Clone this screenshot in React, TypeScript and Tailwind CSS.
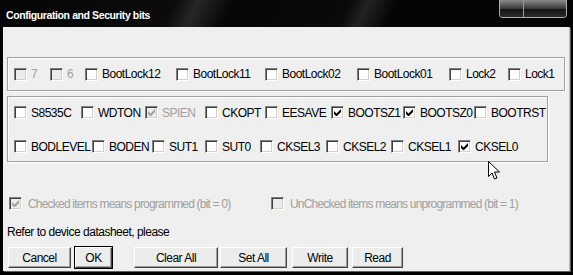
import React from "react";

type Bit = { label: string; w: number; checked?: boolean; disabled?: boolean };

const row1: Bit[] = [
  { label: "7", w: 36, disabled: true },
  { label: "6", w: 35, disabled: true },
  { label: "BootLock12", w: 91 },
  { label: "BootLock11", w: 89 },
  { label: "BootLock02", w: 92 },
  { label: "BootLock01", w: 92 },
  { label: "Lock2", w: 59 },
  { label: "Lock1", w: 60 },
];

const row2: Bit[] = [
  { label: "S8535C", w: 67 },
  { label: "WDTON", w: 64 },
  { label: "SPIEN", w: 60, checked: true, disabled: true },
  { label: "CKOPT", w: 60 },
  { label: "EESAVE", w: 66 },
  { label: "BOOTSZ1", w: 72, checked: true },
  { label: "BOOTSZ0", w: 71, checked: true },
  { label: "BOOTRST", w: 70 },
];

const row3: Bit[] = [
  { label: "BODLEVEL", w: 78 },
  { label: "BODEN", w: 60 },
  { label: "SUT1", w: 53 },
  { label: "SUT0", w: 55 },
  { label: "CKSEL3", w: 66 },
  { label: "CKSEL2", w: 65 },
  { label: "CKSEL1", w: 67 },
  { label: "CKSEL0", w: 60, checked: true },
];

const txt = "whitespace-nowrap text-[12px] leading-none tracking-[-0.5px]";

const Box = ({ checked, disabled }: { checked?: boolean; disabled?: boolean }) => (
  <span
    className={`flex h-[13px] w-[13px] shrink-0 items-center justify-center border border-t-[#808080] border-l-[#808080] border-r-white border-b-white shadow-[inset_1px_1px_0_#404040,inset_-1px_-1px_0_#d4d0c8] ${
      disabled ? "bg-[#ececec]" : "bg-white"
    }`}
  >
    {checked && (
      <svg width="7" height="7" viewBox="0 0 7 7">
        <path
          d="M0 2v3l2 2h1l4-4V0L2.5 4.5z"
          fill={disabled ? "#a0a0a0" : "#000"}
        />
      </svg>
    )}
  </span>
);

const Check = ({ bit }: { bit: Bit }) => (
  <div className="flex shrink-0 items-center gap-[4px]" style={{ width: bit.w }}>
    <Box checked={bit.checked} disabled={bit.disabled} />
    <span className={`${txt} ${bit.disabled ? "text-[#a0a0a0]" : "text-black"}`}>
      {bit.label}
    </span>
  </div>
);

const Btn = ({ label, w, def }: { label: string; w: number; def?: boolean }) => (
  <div className={def ? "border border-black" : ""}>
    <button
      className={`flex h-[21px] items-center justify-center border border-t-white border-l-white border-r-[#404040] border-b-[#404040] bg-[#ececec] text-black shadow-[inset_-1px_-1px_0_#a0a0a0] ${txt}`}
      style={{ width: def ? w - 2 : w }}
    >
      {label}
    </button>
  </div>
);

export default function App() {
  return (
    <div className="relative flex h-[275px] w-[573px] flex-col overflow-hidden bg-black font-['Liberation_Sans',sans-serif]">
      {/* title bar */}
      <div className="flex h-[27px] shrink-0 items-start justify-between bg-[linear-gradient(115deg,#050505_0%,#0b0b0b_30%,#262626_34%,#060606_40%,#0a0a0a_60%,#222_63%,#050505_68%,#050505_100%)] pl-[6px] pr-[6px]">
        <span className="mt-[10px] text-[10.5px] font-bold leading-none tracking-[-0.4px] text-white">
          Configuration and Security bits
        </span>
        <div className="flex h-[18px] overflow-hidden rounded-b-[4px] border border-t-0 border-[#b0b0b0] shadow-[0_0_0_1px_#000]">
          <div className="w-[24px] border-r border-[#9a9a9a] bg-[linear-gradient(#8a8a8a,#3a3a3a_50%,#151515_55%,#2a2a2a)]" />
          <div className="w-[42px] bg-[linear-gradient(#8a8a8a,#3a3a3a_50%,#151515_55%,#2a2a2a)]" />
        </div>
      </div>

      {/* client */}
      <div className="mx-[3px] mb-[4px] flex flex-1 flex-col border-r border-[#bdbdbd] bg-[#efefef] px-[4px] shadow-[1px_1px_0_#606060]">
        <div className="mt-[30px] flex h-[34px] items-center border border-[#a0a0a0] pl-[6px] shadow-[inset_1px_1px_0_#fff,1px_1px_0_#fff]">
          {row1.map((b) => (
            <Check key={b.label} bit={b} />
          ))}
        </div>

        <div className="mt-[5px] flex h-[66px] w-[541px] flex-col gap-[21px] border border-[#a0a0a0] pl-[6px] pt-[9px] shadow-[inset_1px_1px_0_#fff,1px_1px_0_#fff]">
          <div className="flex h-[13px] items-center">
            {row2.map((b) => (
              <Check key={b.label} bit={b} />
            ))}
          </div>
          <div className="flex h-[13px] items-center">
            {row3.map((b) => (
              <Check key={b.label} bit={b} />
            ))}
          </div>
        </div>

        <div className="mt-[35px] flex items-center">
          <div className="flex w-[264px] items-center gap-[6px] pl-[2px]">
            <Box checked disabled />
            <span className="whitespace-nowrap text-[12px] leading-none tracking-[-0.8px] text-[#a0a0a0]">
              Checked items means programmed (bit = 0)
            </span>
          </div>
          <div className="flex items-center gap-[6px]">
            <Box disabled />
            <span className="whitespace-nowrap text-[12px] leading-none tracking-[-0.8px] text-[#a0a0a0]">
              UnChecked items means unprogrammed (bit = 1)
            </span>
          </div>
        </div>

        <div className={`mt-[16px] text-black ${txt}`}>
          Refer to device datasheet, please
        </div>

        <div className="mt-[8px] flex items-center pl-[1px]">
          <Btn label="Cancel" w={63} />
          <div className="ml-[3px]">
            <Btn label="OK" w={39} def />
          </div>
          <div className="ml-[21px] flex gap-[2px]">
            <Btn label="Clear All" w={84} />
            <Btn label="Set All" w={67} />
            <div className="ml-[3px] flex gap-[4px]">
              <Btn label="Write" w={56} />
              <Btn label="Read" w={51} />
            </div>
          </div>
        </div>
      </div>

      {/* mouse pointer */}
      <svg className="absolute left-[488px] top-[161px]" width="13" height="20" viewBox="0 0 13 20">
        <path
          d="M0.5 0.5v15l3.5-3.5 2.5 6 2.5-1-2.5-6h5z"
          fill="#fff"
          stroke="#000"
          strokeWidth="1"
          strokeLinejoin="miter"
        />
      </svg>
    </div>
  );
}
